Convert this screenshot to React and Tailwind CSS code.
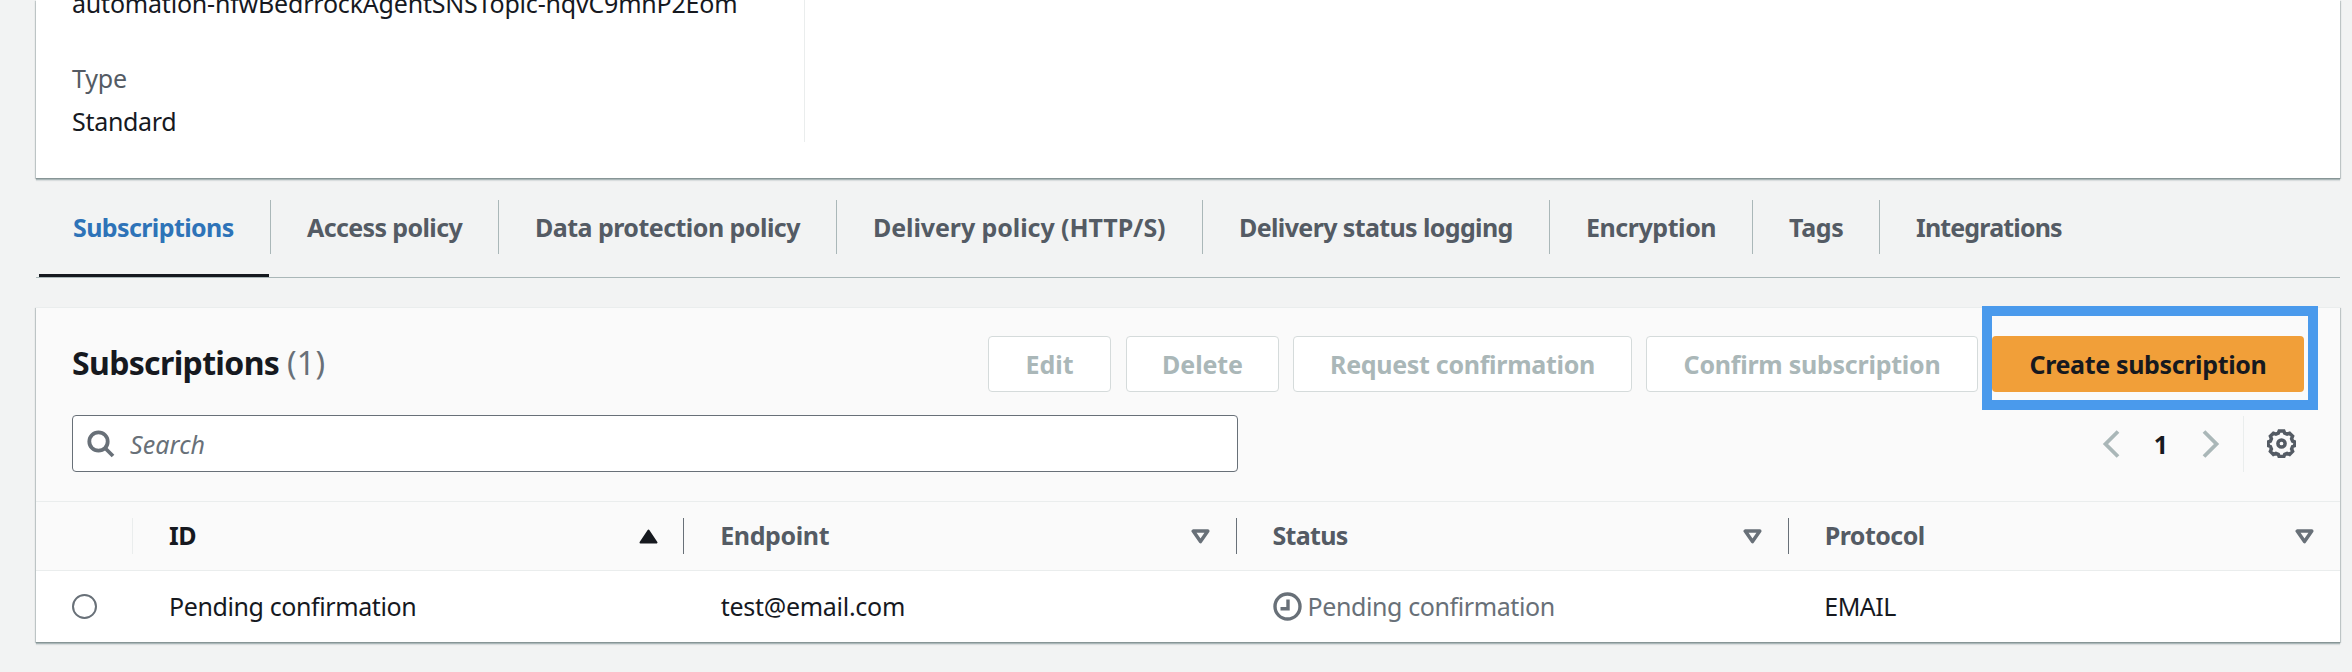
const TABS = [
  ["Access policy", "w-[228px]", "tracking-[-0.62px]"],
  ["Data protection policy", "w-[338px]", "tracking-[-0.53px]"],
  ["Delivery policy (HTTP/S)", "w-[366px]", "tracking-[-0.08px]"],
  ["Delivery status logging", "w-[347px]", "tracking-[-0.62px]"],
  ["Encryption", "w-[203px]", "tracking-[-0.45px]"],
  ["Tags", "w-[127px]", "tracking-[-0.3px]"],
  ["Integrations", "w-[220px]", "tracking-[-0.85px]"],
];

const BUTTONS = [
  ["Edit", "w-[123px] mr-px", "tracking-[0px]"],
  ["Delete", "w-[153px]", "tracking-[-0.1px]"],
  ["Request confirmation", "w-[339px]", "tracking-[-0.3px]"],
  ["Confirm subscription", "w-[332px]", "tracking-[-0.25px]"],
];

const PANEL = "bg-white shadow-[0_1px_0_0_#879596,0_2px_0_0_#aab7b8,0_3px_1px_0_rgba(0,28,36,0.1),1px_1px_1px_0_rgba(0,28,36,0.2),-1px_1px_1px_0_rgba(0,28,36,0.2)]";

function SortIcon({ active }) {
  return active ? (
    <svg className="h-[15px] w-[19px]" viewBox="0 0 19 15">
      <path d="M9.5 1.5 17.5 13.5H1.5Z" fill="#16191f" stroke="#16191f" strokeWidth="2" strokeLinejoin="round" />
    </svg>
  ) : (
    <svg className="h-[15px] w-[19px]" viewBox="0 0 19 15">
      <path d="M2.2 2.1H16.8L9.5 12.6Z" fill="none" stroke="#687078" strokeWidth="3.5" strokeLinejoin="round" />
    </svg>
  );
}

function HeadCell({ label, active, last, tracking }) {
  return (
    <div className={"flex h-9 min-w-0 flex-1 items-center justify-between pl-9 " + (active ? "border-r border-[#687078] pr-[25px]" : last ? "pr-[26px]" : "border-r border-[#687078] pr-[26px]")}>
      <span className={"pb-0.5 font-bold " + tracking + (active ? " text-[#16191f]" : " text-[#545b64]")}>{label}</span>
      <SortIcon active={active} />
    </div>
  );
}

export default function App() {
  return (
    <div className="h-[672px] w-[2352px] overflow-hidden bg-[#f2f3f3] pr-3 pl-9 font-['Noto_Sans','Open_Sans',sans-serif] text-[25px] leading-[36px] text-[#16191f]">
      <section className={"flex h-[178px] " + PANEL}>
        <div className="h-[142px] w-[769px] border-r border-[#eaeded] pl-9">
          <div className="-mt-[15px] tracking-[-0.2px] whitespace-nowrap">automation-nfwBedrrockAgentSNSTopic-nqvC9mnP2Eom</div>
          <div className="mt-[39px] tracking-[-0.2px] text-[#545b64]">Type</div>
          <div className="mt-[7px] tracking-[-0.3px]">Standard</div>
        </div>
      </section>

      <nav className="flex h-[100px] items-start border-b border-[#aab7b8] pt-[22px] font-bold text-[#545b64]">
        <div className="ml-[3px] flex h-[77px] w-[232px] shrink-0 flex-col justify-between">
          <div className="flex h-[54px] items-center border-r border-[#aab7b8] pl-[34px] tracking-[-0.6px] text-[#2e73b8]">Subscriptions</div>
          <div className="h-[3px] w-[230px] bg-[#16191f]" />
        </div>
        {TABS.map(([label, width, tracking], i) => (
          <div key={label} className={"flex h-[54px] shrink-0 items-center pl-9 whitespace-nowrap " + width + " " + tracking + (i < TABS.length - 1 ? " border-r border-[#aab7b8]" : "")}>
            {label}
          </div>
        ))}
      </nav>

      <section className={"mt-[29px] h-[335px] " + PANEL}>
        <div className="relative h-[195px] border-t border-b border-[#eaeded] bg-[#fafafa] px-9 pt-7">
          <div className="flex h-14 items-center gap-[14px]">
            <h2 className="w-[902px] shrink-0 pb-[3px] text-[32px] font-bold tracking-[-0.65px]">
              Subscriptions <span className="font-normal tracking-[0.3px] text-[#687078]">(1)</span>
            </h2>
            {BUTTONS.map(([label, width, tracking]) => (
              <button key={label} className={"flex h-14 shrink-0 items-center justify-center rounded-[4px] border border-[#d5dbdb] bg-white font-bold whitespace-nowrap text-[#aab7b8] " + width + " " + tracking}>
                {label}
              </button>
            ))}
            <button className="flex h-14 w-[312px] shrink-0 items-center justify-center rounded-[4px] bg-[#f19f39] font-bold tracking-[-0.35px] whitespace-nowrap">Create subscription</button>
          </div>
          <div className="absolute top-[-2px] left-[1946px] h-[104px] w-[336px] border-[10px] border-[#4a9aec]" />
          <div className="mt-[23px] flex h-[57px] items-center">
            <div className="flex h-[57px] w-[1166px] items-center rounded-[4px] border border-[#687078] bg-white pl-[14px]">
              <svg className="h-7 w-7" viewBox="0 0 28 28" fill="none" stroke="#687078" strokeWidth="3.8">
                <circle cx="11.5" cy="11.5" r="9.2" />
                <path d="M18 18 26 26" />
              </svg>
              <span className="ml-[15px] tracking-[0.1px] text-[#687078] italic">Search</span>
            </div>
            <div className="ml-[864px] flex items-center">
              <svg className="h-[30px] w-[18px]" viewBox="0 0 18 30" fill="none" stroke="#aab7b8" strokeWidth="3.8">
                <path d="M16 2.5 3.5 15 16 27.5" />
              </svg>
              <span className="w-[82px] text-center font-bold">1</span>
              <svg className="h-[30px] w-[18px]" viewBox="0 0 18 30" fill="none" stroke="#aab7b8" strokeWidth="3.8">
                <path d="M2 2.5 14.5 15 2 27.5" />
              </svg>
            </div>
            <div className="ml-[23px] flex h-14 items-center border-l border-[#eaeded] pl-[23px]">
              <svg className="h-[29px] w-[29px]" viewBox="0 0 29 29" fill="none" stroke="#545b64" strokeWidth="3.5">
                <path d="M12.2 2h4.6l.9 2.2 2.4 1 2.5-1 3 3-1 2.5 1 2.4 2 .8v3.8l-2 .8-1 2.4 1 2.5-3 3-2.5-1-2.4 1-.9 2.200h-4.600l-.9-2.200-2.400-1-2.500 1-3-3 1-2.500-1-2.400-2-.8v-3.800l2-.8 1-2.400-1-2.500 3-3 2.500 1 2.400-1Z" />
                <circle cx="14.5" cy="14.5" r="3.6" />
              </svg>
            </div>
          </div>
        </div>
        <div className="flex h-[69px] items-center border-b border-[#eaeded] bg-[#fafafa]">
          <div className="h-9 w-[97px] shrink-0 border-r border-[#eaeded]" />
          <HeadCell label="ID" active tracking="tracking-[-0.4px]" />
          <HeadCell label="Endpoint" tracking="tracking-[-0.4px]" />
          <HeadCell label="Status" tracking="tracking-[-0.7px]" />
          <HeadCell label="Protocol" last tracking="tracking-[-0.55px]" />
        </div>
        <div className="flex h-[71px] items-center">
          <div className="w-[97px] shrink-0 pl-9">
            <div className="h-[25px] w-[25px] rounded-full border-2 border-[#687078] bg-white" />
          </div>
          <div className="flex-1 pb-px pl-9 tracking-[-0.4px]">Pending confirmation</div>
          <div className="flex-1 pb-px pl-9 tracking-[-0.28px]">test@email.com</div>
          <div className="flex flex-1 items-center gap-[6px] pl-9 tracking-[-0.4px] text-[#687078]">
            <svg className="h-[29px] w-[29px]" viewBox="0 0 29 29" fill="none" stroke="#687078" strokeWidth="3.4">
              <circle cx="14.5" cy="14.5" r="12.5" />
              <path d="M15 7.5v9.2H7.5" />
            </svg>
            <span className="pb-px">Pending confirmation</span>
          </div>
          <div className="flex-1 pb-px pl-9 tracking-[-0.5px]">EMAIL</div>
        </div>
      </section>
    </div>
  );
}
